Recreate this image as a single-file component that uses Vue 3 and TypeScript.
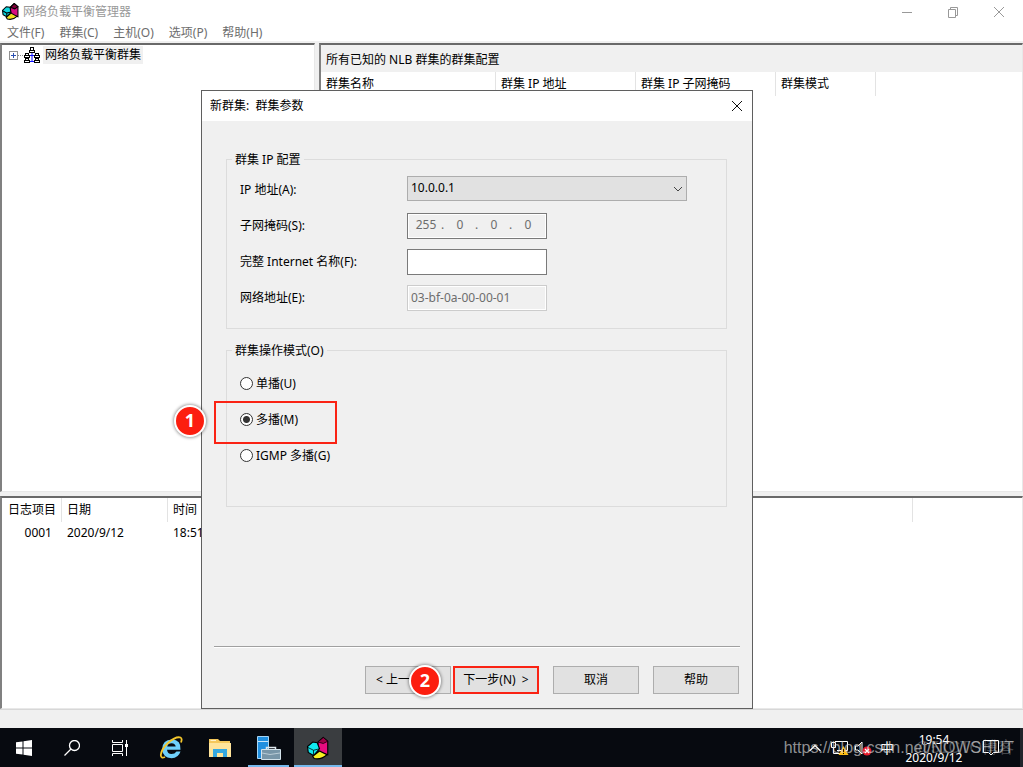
<script setup lang="ts">
import { ref } from 'vue'

const menus: string[] = ['文件(F)', '群集(C)', '主机(O)', '选项(P)', '帮助(H)']
const clusterColumns: string[] = ['群集名称', '群集 IP 地址', '群集 IP 子网掩码', '群集模式']
const octets = ref<string[]>(['255', '0', '0', '0'])
const address = ref<string>('10.0.0.1')
const internetName = ref<string>('')
const mac = ref<string>('03-bf-0a-00-00-01')
const mode = ref<string>('multicast')
const modes: { value: string; label: string }[] = [
  { value: 'unicast', label: '单播(U)' },
  { value: 'multicast', label: '多播(M)' },
  { value: 'igmp', label: 'IGMP 多播(G)' },
]
</script>

<template>
  <div class="desktop">
    <header class="titlebar">
      <svg class="app-icon" viewBox="0 0 32 32" aria-hidden="true">
        <path d="M16 8 L23 1 L30 7 V26 L16 21Z" fill="#d80c80" stroke="#000" stroke-width="2" />
        <path d="M16 8 L23 1 L30 7 L24 11Z" fill="#800038" stroke="#000" stroke-width="2" />
        <path d="M1 14 L8 7 L15 8 L17 18 L9 26 L2 22Z" fill="#10d8e0" stroke="#000" stroke-width="2" />
        <path d="M2 15L9 19L17 17M9 19V25" fill="none" stroke="#000" stroke-width="2" />
        <path d="M8 27 L17 19 L28 25 Q20 33 10 30Z" fill="#f0e020" stroke="#000" stroke-width="2" />
      </svg>
      <h1>网络负载平衡管理器</h1>
      <div class="win-controls">
        <button type="button" aria-label="最小化">
          <svg viewBox="0 0 12 12"><path d="M1 6.500H11" /></svg>
        </button>
        <button type="button" aria-label="还原">
          <svg viewBox="0 0 12 12"><path d="M1.500 3.500H8.500V11.500H1.500ZM3.500 3.500V1.500H10.500V9.500H8.500" /></svg>
        </button>
        <button type="button" aria-label="关闭">
          <svg viewBox="0 0 12 12"><path d="M1 1L11 11M11 1L1 11" /></svg>
        </button>
      </div>
    </header>

    <nav class="menubar">
      <button v-for="m in menus" :key="m" type="button">{{ m }}</button>
    </nav>

    <main class="panes">
      <section class="pane tree">
        <svg class="expander" viewBox="0 0 16 16" aria-hidden="true">
          <path d="M9 8.500H16" stroke="#888" stroke-dasharray="1 1" />
          <rect x="0.500" y="4.500" width="8" height="8" fill="#fff" stroke="#919191" />
          <path d="M2 8.500H7M4.500 6V11" stroke="#2a4fb0" />
        </svg>
        <svg class="nodes" viewBox="0 0 16 16" aria-hidden="true">
          <path d="M8 5V15M3 8.500H13M5 14.500H11" stroke="#1010ff" fill="none" />
          <g fill="#fff" stroke="#000">
            <rect x="6.500" y="0.500" width="3" height="3" /><rect x="5.500" y="3.500" width="5" height="2" />
            <rect x="1.500" y="6.500" width="3" height="2" /><rect x="0.500" y="8.500" width="5" height="2" />
            <rect x="11.500" y="6.500" width="3" height="2" /><rect x="10.500" y="8.500" width="5" height="2" />
            <rect x="1.500" y="11.500" width="3" height="2" /><rect x="0.500" y="13.500" width="5" height="2" />
            <rect x="11.500" y="11.500" width="3" height="2" /><rect x="10.500" y="13.500" width="5" height="2" />
          </g>
        </svg>
        <span class="tree-label">网络负载平衡群集</span>
      </section>
      <section class="pane">
        <h2>所有已知的 NLB 群集的群集配置</h2>
        <table class="clusters">
          <thead>
            <tr><th v-for="c in clusterColumns" :key="c">{{ c }}</th><th></th></tr>
          </thead>
        </table>
      </section>
    </main>

    <section class="pane log">
      <table>
        <thead>
          <tr><th>日志项目</th><th>日期</th><th>时间</th><th></th><th></th></tr>
        </thead>
        <tbody>
          <tr><td class="num">0001</td><td>2020/9/12</td><td>18:51</td><td></td><td></td></tr>
        </tbody>
      </table>
    </section>
    <div class="statusbar"></div>

    <footer class="taskbar">
      <button type="button" class="task" aria-label="开始">
        <svg viewBox="0 0 16 16"><path d="M0 2.300L6.500 1.400V7.500H0ZM7.500 1.200L16 0V7.500H7.500ZM0 8.500H6.500V14.600L0 13.700ZM7.500 8.500H16V16L7.500 14.800Z" fill="#fff" /></svg>
      </button>
      <button type="button" class="task" aria-label="搜索">
        <svg viewBox="0 0 16 16"><g fill="none" stroke="#fff" stroke-width="1.300"><circle cx="10.500" cy="5.500" r="5" /><path d="M7 9L0.500 15.500" /></g></svg>
      </button>
      <button type="button" class="task" aria-label="任务视图">
        <svg viewBox="0 0 16 16"><path d="M0.500 0V2.500H10.500V0M0.500 16V13.500H10.500V16M0.500 4.500H10.500V11.500H0.500ZM14.500 0V16" fill="none" stroke="#fff" /><path d="M13 4H16V7H13Z" fill="#fff" /></svg>
      </button>
      <button type="button" class="task big first" aria-label="Internet Explorer">
        <svg viewBox="0 0 24 24">
          <path d="M17.500 15.500Q15.800 18 12.500 18Q8.500 18 8 13.800H21.500Q22.400 4 12.800 3.500Q3.500 4 3.200 12.800Q3.500 21.800 12.500 22.200Q19.500 22 21.500 15.500ZM8.200 10.500Q9 7.300 12.600 7.300Q16.300 7.500 16.700 10.500Z" fill="#6fd0fa" />
          <path d="M6 21Q2 23 1.800 19Q2.500 13 9 7Q17 0 21.500 1.500Q23.500 2.500 22 6.500" fill="none" stroke="#f4c72c" stroke-width="1.800" />
        </svg>
      </button>
      <button type="button" class="task big" aria-label="文件资源管理器">
        <svg viewBox="0 0 24 24">
          <path d="M1 3H10L12 5H22V21H1Z" fill="#f5c85b" />
          <path d="M1 7H23V21H1Z" fill="#ffe49a" />
          <path d="M2.500 4.500H8" stroke="#fff2c8" />
          <path d="M5 21V13H19V21H15V17H9V21Z" fill="#35a8e0" />
        </svg>
      </button>
      <button type="button" class="task big running" aria-label="服务器管理器">
        <svg viewBox="0 0 24 24">
          <path d="M0.500 0.500H11.500V22.500H0.500Z" fill="#1f8fe0" stroke="#a5d5f5" />
          <path d="M1 5.500H11" stroke="#c8e6fa" />
          <path d="M9.500 14V11.500H18.500V14" fill="none" stroke="#dfe8ee" stroke-width="1.500" />
          <path d="M4.500 13.500H23.500V23.500H4.500Z" fill="#7896a8" stroke="#d3e2ea" />
          <path d="M5 17L13 18.500L23 17" fill="none" stroke="#b9ccd6" />
        </svg>
      </button>
      <button type="button" class="task big running active" aria-label="网络负载平衡管理器">
        <svg viewBox="0 0 32 32">
          <path d="M16 8 L23 2 L29 7 V25 L16 21Z" fill="#e80c80" stroke="#000" stroke-width="1.500" />
          <path d="M16 8 L23 2 L29 7 L23 10Z" fill="#a00048" stroke="#000" />
          <path d="M2 14 L9 8 L15 9 L18 17 L10 26 L3 22Z" fill="#10e8f0" stroke="#000" stroke-width="1.500" />
          <path d="M2 15L10 19L18 17M10 19V25" fill="none" stroke="#000" />
          <path d="M9 27 L18 20 L28 25 Q20 32 11 30Z" fill="#f8f020" stroke="#000" stroke-width="1.500" />
        </svg>
      </button>
      <div class="tray">
        <svg class="tray-icons" viewBox="0 0 64 20" aria-hidden="true">
          <path d="M0.500 13L6 7.500L11.500 13" fill="none" stroke="#fff" stroke-width="1.300" />
          <path d="M26 3.500H38.500V12.500H28M22.500 4.500H26.500V9.500H22.500ZM24.500 10V15.500H31" fill="none" stroke="#fff" />
          <path d="M34.500 8L39.500 17H29.500Z" fill="#fbbd16" /><path d="M34.500 11V14M34.500 15V16" stroke="#000" />
          <path d="M46.500 8H49L53 4V16L49 12H46.500Z" fill="none" stroke="#fff" />
          <circle cx="58" cy="13" r="4.500" fill="#e81c2c" /><path d="M56 11L60 15M60 11L56 15" stroke="#fff" stroke-width="1.300" />
        </svg>
        <span class="ime">中</span>
        <div class="clock"><span>19:54</span><span>2020/9/12</span></div>
        <svg class="notice" viewBox="0 0 18 18" aria-hidden="true"><path d="M1.500 1.500H16.500V13.500H11.500L9 16L6.500 13.500H1.500Z" fill="none" stroke="#fff" /></svg>
      </div>
      <span class="watermark faint">@51CTO博客</span>
      <span class="watermark">https://blog.csdn.net/NOWSHUT</span>
    </footer>

    <form class="dialog" role="dialog" aria-labelledby="dialog-title" @submit.prevent>
      <header class="dialog-title">
        <h2 id="dialog-title">新群集:&nbsp; 群集参数</h2>
        <button type="button" aria-label="关闭">
          <svg viewBox="0 0 12 12"><path d="M1 1L11 11M11 1L1 11" /></svg>
        </button>
      </header>
      <div class="dialog-body">
        <fieldset>
          <legend>群集 IP 配置</legend>
          <div class="row">
            <label for="ip">IP 地址(A):</label>
            <div class="combo">
              <select id="ip" v-model="address"><option>10.0.0.1</option></select>
              <svg viewBox="0 0 10 6" aria-hidden="true"><path d="M1 1L5 5L9 1" /></svg>
            </div>
          </div>
          <div class="row">
            <label for="octet-0">子网掩码(S):</label>
            <div class="octets">
              <template v-for="(o, i) in octets" :key="i">
                <span v-if="i > 0">.</span>
                <input :id="`octet-${i}`" v-model="octets[i]" disabled :aria-label="`子网掩码 ${i + 1}`" />
              </template>
            </div>
          </div>
          <div class="row">
            <label for="name">完整 Internet 名称(F):</label>
            <input id="name" v-model="internetName" class="field" type="text" />
          </div>
          <div class="row">
            <label for="mac">网络地址(E):</label>
            <input id="mac" v-model="mac" class="field" type="text" disabled />
          </div>
        </fieldset>
        <fieldset class="modes">
          <legend>群集操作模式(O)</legend>
          <div v-for="m in modes" :key="m.value" class="row">
            <input :id="m.value" v-model="mode" type="radio" name="mode" :value="m.value" />
            <label :for="m.value">{{ m.label }}</label>
            <template v-if="m.value === 'multicast'">
              <span class="highlight"></span>
              <span class="badge one">1</span>
            </template>
          </div>
        </fieldset>
        <div class="actions">
          <button type="button" class="back">&lt; 上一步(B)<span class="badge two">2</span></button>
          <button type="submit" class="next">下一步(N)&nbsp; &gt;</button>
          <button type="button">取消</button>
          <button type="button">帮助</button>
        </div>
      </div>
    </form>
  </div>
</template>

<style>
html, body { margin: 0; background: #f0f0f0; }
</style>

<style scoped>
* { box-sizing: border-box; }
.desktop {
  position: relative;
  display: flex;
  flex-direction: column;
  height: 100vh;
  min-height: 720px;
  overflow: hidden;
  background: #f0f0f0;
  color: #000;
  font: 12px/18px "Noto Sans", "Noto Sans CJK SC", sans-serif;
}
button, input, select { font: inherit; color: inherit; margin: 0; padding: 0; }
h1, h2 { margin: 0; font-size: 12px; font-weight: 400; }
.titlebar {
  display: flex;
  align-items: center;
  height: 23px;
  padding-left: 2px;
  background: #fff;
  color: #999;
}
.app-icon { width: 17px; height: 17px; margin-right: 4px; }
.win-controls { display: flex; margin-left: auto; }
.win-controls button, .dialog-title button { display: grid; place-items: center; border: 0; background: none; }
.win-controls button { width: 46px; height: 21px; }
.win-controls button:last-child { margin-right: 1px; }
.win-controls svg, .dialog-title svg { width: 12px; height: 12px; fill: none; stroke: #999; }
.menubar { display: flex; gap: 15px; height: 18px; padding-left: 7px; background: #fff; color: #6d6d6d; }
.menubar button { border: 0; background: none; height: 20px; }
.panes { display: grid; grid-template-columns: 315px minmax(0, 1fr); gap: 4px; flex: 1; min-height: 0; padding-top: 2px; }
.pane { border-style: solid; border-width: 2px 1px 1px 2px; border-color: #696969 #e8e8e8 #e8e8e8 #808080; background: #fff; overflow: hidden; }
.tree { display: flex; align-items: flex-start; padding: 1px 0 0 7px; }
.expander { width: 16px; height: 16px; margin-top: 1px; }
.nodes { width: 16px; height: 16px; margin: 1px 3px 0 -1px; }
.tree-label { padding: 0 2px; background: #f0f0f0; }
.pane h2 { height: 27px; padding: 6px 5px 0; background: #f0f0f0; }
table { border-collapse: separate; border-spacing: 0; table-layout: fixed; }
th { height: 24px; padding: 0 0 0 5px; border-right: 1px solid #e3e3e3; font-weight: 400; text-align: left; white-space: nowrap; }
td { height: 22px; padding: 0 0 0 5px; white-space: nowrap; }
.clusters { width: 100%; }
.clusters th:nth-child(1) { width: 175px; }
.clusters th:nth-child(2), .clusters th:nth-child(3) { width: 140px; }
.clusters th:nth-child(4) { width: 100px; }
th:last-child { border-right: 0; }
.log { height: 213px; margin-top: 4px; }
.log table { width: 100%; }
.log th:nth-child(1) { width: 60px; padding-left: 6px; }
.log th:nth-child(2) { width: 106px; }
.log th:nth-child(3) { width: 106px; }
.log th:nth-child(4) { width: 639px; }
.log .num { padding: 0 10px 0 0; text-align: right; }
.statusbar { height: 19px; border-top: 1px solid #d7d7d7; background: #f0f0f0; }

.taskbar { position: relative; display: flex; height: 39px; background: #070a10; color: #fff; border-right: 3px solid #20242a; }
.task { display: grid; place-items: center; width: 48px; border: 0; background: none; }
.task svg { width: 16px; height: 16px; }
.task.big { width: 49px; }
.task.first { margin-left: 2px; }
.task.big svg { width: 24px; height: 24px; }
.task.running { box-shadow: inset 0 -2px #76b9ed; border: solid #070a10; border-width: 0 4px; }
.task.active { width: 48px; margin-left: 1px; background: #3a3d40; border: 0; }
.tray { display: flex; align-items: center; margin-left: auto; }
.tray-icons { width: 64px; height: 20px; }
.ime { width: 28px; padding-left: 7px; font-size: 14px; }
.clock { display: flex; flex-direction: column; align-items: center; justify-content: center; width: 66px; height: 39px; margin-right: 15px; padding-top: 2px; }
.notice { width: 18px; height: 18px; margin-right: 20px; }
.watermark { position: absolute; right: 6px; top: 9px; color: rgba(220, 220, 220, 0.65); font: 16px/22px "Liberation Sans", "Noto Sans CJK SC", sans-serif; white-space: nowrap; }
.watermark.faint { color: rgba(220, 220, 220, 0.3); }

.dialog { position: absolute; left: 201px; top: 90px; display: flex; flex-direction: column; width: 552px; height: 619px; border: 1px solid #5f5f5f; background: #f0f0f0; }
.dialog-title { display: flex; align-items: center; justify-content: space-between; height: 30px; padding: 0 9px 0 8px; background: #fff; }
.dialog-title svg { stroke: #111; }
.dialog-body { display: flex; flex: 1; flex-direction: column; padding: 28px 13px 14px 12px; }
fieldset { min-width: 0; margin: 0 12px 11px; padding: 2px 0 13px 5px; border: 1px solid #dcdcdc; }
legend { padding: 2px 3px 0; }
.row { position: relative; display: flex; align-items: center; height: 36px; padding: 2px 0 0 8px; }
.row > label { width: 167px; }
.combo { position: relative; width: 280px; margin-bottom: 4px; }
.combo select { display: block; width: 100%; height: 25px; padding: 0 3px; border: 1px solid #adadad; border-radius: 0; background: #e1e1e1; appearance: none; }
.combo svg { position: absolute; right: 4px; top: 10px; width: 10px; height: 6px; fill: none; stroke: #444; pointer-events: none; }
.field, .octets { width: 140px; height: 26px; border: 1px solid #7a7a7a; background: #fff; }
.field { padding: 0 3px 2px; }
.field:disabled { border-color: #ccc; background: #f0f0f0; color: #6d6d6d; box-shadow: inset 0 0 0 1px #fff; }
.octets { display: flex; padding: 1px 3px 3px; background: #f0f0f0; box-shadow: inset 0 0 0 1px #fff; color: #6d6d6d; }
.octets input { width: 30px; border: 0; background: none; text-align: center; }
.octets span { width: 4px; line-height: 20px; }
.modes { padding: 5px 0 33px 5px; }
.modes .row { padding-top: 0; }
.modes .row > label { width: auto; padding-top: 2px; }
input[type="radio"] { width: 13px; height: 13px; margin-right: 3px; border: 1px solid #333; border-radius: 50%; background: #fff; appearance: none; }
input[type="radio"]:checked { background: radial-gradient(circle, #333 3px, #fff 4px); }
.highlight { position: absolute; left: -18px; top: 0; width: 123px; height: 43px; border: 2px solid #fa2314; pointer-events: none; }
.badge { position: absolute; z-index: 1; display: grid; place-items: center; width: 32px; height: 32px; border: 2px solid #fff; border-radius: 50%; background: #fc1e0f; box-shadow: 0 0 3px 1px rgba(0, 0, 0, 0.35); color: #fff; font-size: 18px; font-weight: 700; line-height: 24px; padding-bottom: 2px; }
.one { left: -58px; top: 4px; }
.two { left: 43px; top: -2px; }
.actions { display: flex; justify-content: flex-end; margin: auto -1px 0 0; padding: 19px 1px 0 0; border-top: 1px solid #a0a0a0; box-shadow: inset 0 1px #fff; }
.actions button { position: relative; width: 86px; height: 28px; margin-left: 14px; border: 1px solid #adadad; background: #e1e1e1; white-space: nowrap; }
.actions .next { margin-left: 2px; border: 2px solid #fa2314; }
.actions .back { text-align: left; padding-left: 10px; }
</style>
